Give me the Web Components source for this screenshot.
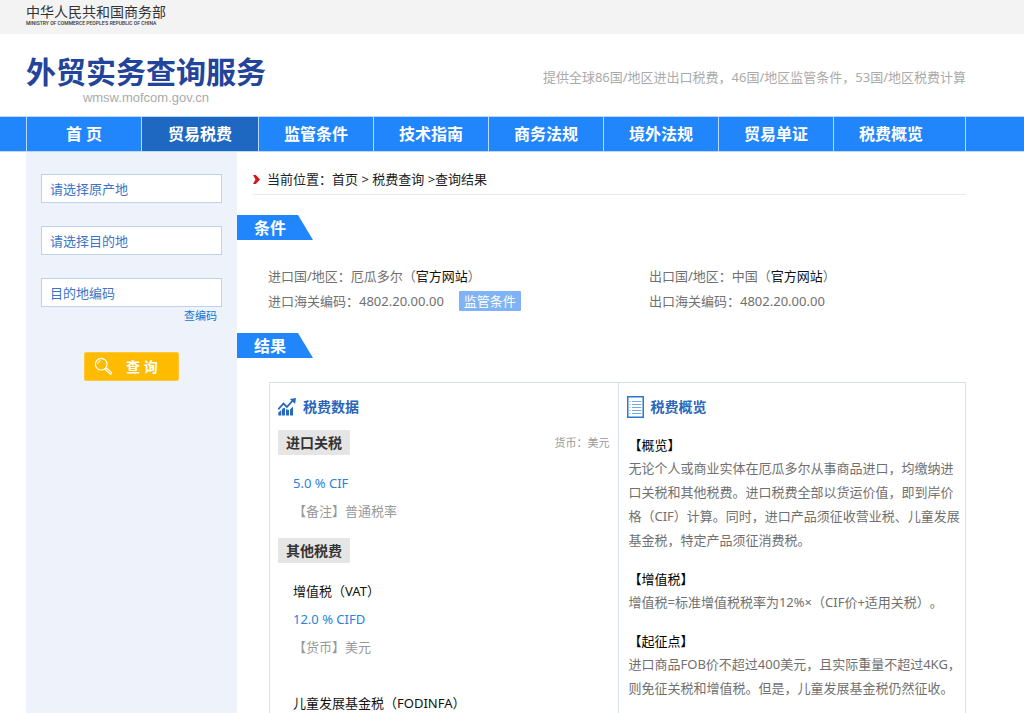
<!DOCTYPE html>
<html lang="zh-CN">
<head>
<meta charset="utf-8">
<meta name="viewport" content="width=device-width, initial-scale=1">
<title>外贸实务查询服务</title>
<style>
  html { --blue: #2186fb; --deep: #2468bf; --link: #2a82dc; --line: #d5e1eb; --left: 26px; --right: 58px; }
  body { margin: 0; background: #fff; color: #707070; font: 13px/24px "Noto Sans", "Noto Sans CJK SC", sans-serif; text-spacing-trim: space-all; overflow-x: hidden; }
</style>
</head>
<body>
<query-page></query-page>

<script>
  // Each component supplies its own styles and markup; the base class mounts them.
  class Base extends HTMLElement {
    connectedCallback() {
      if (this.shadowRoot) return;
      const t = document.createElement('template');
      t.innerHTML = `<style>*{box-sizing:border-box}a{color:inherit;text-decoration:none}${this.css()}</style>${this.html()}`;
      this.attachShadow({ mode: 'open' }).append(t.content.cloneNode(true));
    }
    css() { return ':host{display:block}'; }
    html() { return '<slot></slot>'; }
  }

  customElements.define('ministry-bar', class extends Base {
    css() { return `
      :host{display:block;height:34px;padding:4px var(--right) 0 var(--left);background:#f3f3f3;color:#333}
      .cn{font-size:14px;line-height:16px}
      .en{font:500 5px/6px Roboto,"Liberation Sans",sans-serif;color:#333}`; }
    html() { return `<div class="cn">中华人民共和国商务部</div><div class="en">MINISTRY OF COMMERCE PEOPLE'S REPUBLIC OF CHINA</div>`; }
  });

  customElements.define('brand-header', class extends Base {
    css() { return `
      :host{display:flex;justify-content:space-between;align-items:flex-start;height:82px;padding:20px var(--right) 0 var(--left)}
      h1{margin:0;font-size:30px;line-height:36px;font-weight:700;color:#22449a;white-space:nowrap}
      .url{font:13px/16px "Liberation Sans",sans-serif;color:#aaa;text-align:center}
      p{margin:11px 0 0;color:#aaa;white-space:nowrap}`; }
    html() { return `<div><h1>外贸实务查询服务</h1><div class="url">wmsw.mofcom.gov.cn</div></div><p>提供全球86国/地区进出口税费，46国/地区监管条件，53国/地区税费计算</p>`; }
  });

  customElements.define('nav-item', class extends Base {
    css() { return `
      :host{display:block;min-width:115px;border-left:1px solid #b9dbff}
      :host([current]){min-width:117px;background:#1f68c1}
      :host([last]){flex:1;border-right:1px solid #b9dbff}
      :host([last]) a{text-align:left}
      a{display:block;padding:0 25px;text-align:center;color:#fff;font-weight:700;font-size:16px;line-height:34px;white-space:pre}`; }
    html() { return `<a href="#"><slot></slot></a>`; }
  });

  customElements.define('site-nav', class extends Base {
    css() { return `
      :host{display:block;background:var(--blue);border-top:1px solid #b9dbff;border-bottom:1px solid #b9dbff;padding:0 var(--right) 0 var(--left)}
      nav{display:flex}`; }
    html() { return `<nav><slot></slot></nav>`; }
  });

  customElements.define('query-form', class extends Base {
    css() { return `
      :host{display:block;padding:22px 15px;background:#eef3fb}
      form{display:flex;flex-direction:column;gap:23px}
      input{width:100%;height:29px;margin:0;padding:0 8px;border:1px solid #c0d2e8;border-radius:0;background:#fff;font:inherit;color:#2d6cc0;outline:0}
      input::placeholder{color:#3d74c6;opacity:1}
      a{display:block;padding-right:5px;text-align:right;font-size:11px;line-height:18px;color:#1874d0}
      button{display:flex;align-items:center;align-self:center;width:95px;height:29px;padding:0 9px;border:1px solid #ffc83a;border-radius:2px;background:#fb0;color:#fff;font:700 14px/20px "Noto Sans","Noto Sans CJK SC",sans-serif;gap:13px;white-space:pre;margin-top:4px}
      svg{flex:none}`; }
    html() { return `<form onsubmit="return false">
      <input type="text" aria-label="原产地" placeholder="请选择原产地">
      <input type="text" aria-label="目的地" placeholder="请选择目的地">
      <div><input type="text" aria-label="目的地编码" placeholder="目的地编码"><a href="#">查编码</a></div>
      <button type="submit"><svg width="19" height="19" viewBox="0 0 19 19" fill="none" stroke="#fff"><circle cx="7.2" cy="7.2" r="5.8" stroke-width="1.2"/><path d="M3.7 7.2a3.5 3.5 0 0 1 3-3.5" stroke-width="1"/><path d="M11.3 12.5l1.4-1.3 4.6 4.2c.8.8-.5 2.2-1.4 1.4zM10.8 10.8l1.2 1.2" stroke-width="1.2"/></svg>查 询</button></form>`; }
  });

  customElements.define('crumb-bar', class extends Base {
    css() { return `
      :host{display:block;margin-left:16px;border-bottom:1px solid #ebebeb;color:#222}
      nav{display:flex;align-items:center;height:42px;padding-top:12px;gap:7px;white-space:pre}`; }
    html() { return `<nav aria-label="当前位置"><svg width="7" height="9" viewBox="0 0 7 9" fill="#d7151a"><path d="M0 0h2.8L7 4.5 2.8 9H0l2.5-4.5z"/></svg><span><slot></slot></span></nav>`; }
  });

  customElements.define('section-tab', class extends Base {
    css() { return `
      :host{display:block}
      h2{width:76px;height:25px;margin:0;padding-left:17px;background:var(--blue);clip-path:polygon(0 0,61px 0,100% 100%,0 100%);color:#fff;font-size:16px;line-height:26px;font-weight:700}`; }
    html() { return `<h2><slot></slot></h2>`; }
  });

  customElements.define('trade-conditions', class extends Base {
    css() { return `
      :host{display:grid;grid-template-columns:381px 1fr;grid-auto-rows:25px;align-items:center;padding:23px 0 20px 31px;white-space:nowrap}
      a{color:#111}
      div{display:flex;align-items:center;gap:15px}
      button{height:20px;padding:0 5px;border:0;border-radius:1px;background:#7fb3f5;color:#fff;font:inherit;line-height:20px}`; }
    html() { return `
      <div><span>进口国/地区：厄瓜多尔（<a href="#">官方网站</a>）</span></div>
      <div><span>出口国/地区：中国（<a href="#">官方网站</a>）</span></div>
      <div><span>进口海关编码：4802.20.00.00</span><button type="button">监管条件</button></div>
      <div><span>出口海关编码：4802.20.00.00</span></div>`; }
  });

  customElements.define('result-board', class extends Base {
    css() { return `
      :host{display:grid;grid-template-columns:1fr 1fr;margin:24px 0 0 32px;border:1px solid var(--line);border-bottom:0}
      ::slotted(:last-child){border-left:1px solid var(--line)}`; }
  });

  customElements.define('board-column', class extends Base {
    css() { return `
      :host{display:block;min-width:0;padding:12px 8px 0 8px}
      header{display:flex;align-items:center;gap:7px;height:24px;color:#2a65ba}
      h3{margin:0;font-size:14px;line-height:24px;font-weight:700}`; }
    html() { return `<header><slot name="icon"></slot><h3>${this.getAttribute('heading')}</h3></header><slot></slot>`; }
  });

  customElements.define('chart-icon', class extends Base {
    css() { return `:host{display:block;width:18px;height:18px}svg{display:block}`; }
    html() { return `<svg width="18" height="18" viewBox="0 0 18 18" fill="#2468bf"><path d="M.3 14.500v3h3v-5.500zM4 11v6.500h3v-8zM8 11.200v6.300h3v-5.500zM12 11.500v6h3V8.500z"/><path d="M.2 11.300L5.500 5.500l3.400 3.500 6-6.600" fill="none" stroke="#2468bf" stroke-width="1.800"/><path d="M11.800 1L18 0l-.9 6z"/></svg>`; }
  });

  customElements.define('list-icon', class extends Base {
    css() { return `:host{display:block;width:17px;height:22px}svg{display:block}`; }
    html() { return `<svg width="17" height="22" viewBox="0 0 17 22" fill="none" stroke="#2a78cf"><path d="M.75.75h15.5v20.5H.75z" stroke-width="1.5"/><path d="M2.5 5.5h1M5 5.5h9.500M2.500 8.500h1M5 8.500h9.500M2.500 11.500h1M5 11.500h9.500M2.500 14.500h1M5 14.500h9.500M2.500 17.500h1M5 17.500h9.500" stroke="#78a9df"/></svg>`; }
  });

  customElements.define('tax-group', class extends Base {
    css() { return `
      :host{display:block;padding-bottom:13px}
      header{display:flex;justify-content:space-between;align-items:center}
      h4{margin:0;padding:0 8px;background:#e5e5e5;border-radius:1px;color:#333;font-size:14px;line-height:25px;font-weight:700}
      small{font-size:11px;line-height:24px;color:#999}`; }
    html() {
      const note = this.getAttribute('note');
      return `<header><h4>${this.getAttribute('heading')}</h4>${note ? `<small>${note}</small>` : ''}</header><slot></slot>`; }
  });

  customElements.define('tax-entry', class extends Base {
    css() { return `
      :host{display:block;padding:14px 0 0 15px;line-height:28px}
      :host([spaced]){padding-top:28px}
      .name{color:#111}.rate{color:var(--link)}.memo{color:#999}`; }
    html() { return ['name', 'rate', 'memo'].filter(k => this.hasAttribute(k)).map(k => `<div class="${k}">${this.getAttribute(k)}</div>`).join(''); }
  });

  customElements.define('tax-note', class extends Base {
    css() { return `
      :host{display:block;margin:0 -6px 16px 2px}
      h4{margin:0;font-size:13px;line-height:22px;font-weight:400;color:#000}
      p{margin:0}`; }
    html() { return `<h4>${this.getAttribute('heading')}</h4><p><slot></slot></p>`; }
  });

  customElements.define('query-page', class extends Base {
    css() { return `
      :host{display:flex;flex-direction:column;height:100vh;overflow:hidden}
      .body{display:grid;grid-template-columns:211px minmax(0,1fr);flex:1;min-height:0;padding:0 var(--right) 0 var(--left)}
      section-tab{margin-top:20px}
      trade-conditions + section-tab{margin-top:0}
      .groups{padding-top:11px}
      .notes{padding-top:15px}
      ministry-bar,brand-header,site-nav{flex:none}`; }
    html() { return `
      <ministry-bar></ministry-bar>
      <brand-header></brand-header>
      <site-nav>
        <nav-item>首 页</nav-item><nav-item current>贸易税费</nav-item><nav-item>监管条件</nav-item><nav-item>技术指南</nav-item><nav-item>商务法规</nav-item><nav-item>境外法规</nav-item><nav-item>贸易单证</nav-item><nav-item last>税费概览</nav-item>
      </site-nav>
      <div class="body">
        <query-form></query-form>
        <main>
          <crumb-bar>当前位置：<a href="#" style="color:inherit;text-decoration:none">首页</a> &gt; <a href="#" style="color:inherit;text-decoration:none">税费查询</a> &gt;查询结果</crumb-bar>
          <section-tab>条件</section-tab>
          <trade-conditions></trade-conditions>
          <section-tab>结果</section-tab>
          <result-board>
            <board-column heading="税费数据">
              <chart-icon slot="icon"></chart-icon>
              <div class="groups">
                <tax-group heading="进口关税" note="货币：美元"><tax-entry rate="5.0 % CIF" memo="【备注】普通税率"></tax-entry></tax-group>
                <tax-group heading="其他税费">
                  <tax-entry name="增值税（VAT）" rate="12.0 % CIFD" memo="【货币】美元"></tax-entry>
                  <tax-entry spaced name="儿童发展基金税（FODINFA）"></tax-entry>
                </tax-group>
              </div>
            </board-column>
            <board-column heading="税费概览">
              <list-icon slot="icon"></list-icon>
              <div class="notes">
                <tax-note heading="【概览】">无论个人或商业实体在厄瓜多尔从事商品进口，均缴纳进口关税和其他税费。进口税费全部以货运价值，即到岸价格（CIF）计算。同时，进口产品须征收营业税、儿童发展基金税，特定产品须征消费税。</tax-note>
                <tax-note heading="【增值税】">增值税=标准增值税税率为12%×（CIF价+适用关税）。</tax-note>
                <tax-note heading="【起征点】">进口商品FOB价不超过400美元，且实际重量不超过4KG，则免征关税和增值税。但是，儿童发展基金税仍然征收。</tax-note>
              </div>
            </board-column>
          </result-board>
        </main>
      </div>`; }
  });
</script>
</body>
</html>
